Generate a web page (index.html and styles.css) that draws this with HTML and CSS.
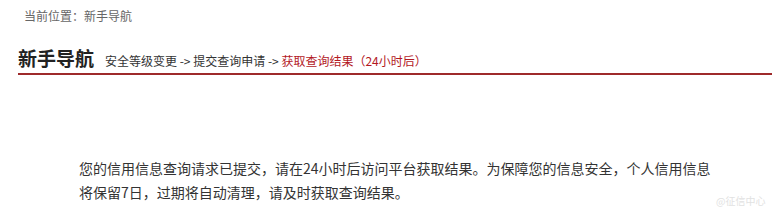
FILE: index.html
```html
<!DOCTYPE html>
<html lang="zh-CN">
  <head>
    <meta charset="UTF-8" />
    <meta name="viewport" content="width=device-width, initial-scale=1.0" />
    <title>新手导航</title>
    <link rel="stylesheet" href="styles.css">
  </head>
  <body>
    <div class="crumb">当前位置：新手导航</div>
    <div class="guide-head">
      <h1>新手导航</h1>
      <div class="steps">
        安全等级变更 -&gt; 提交查询申请 -&gt; <span class="current">获取查询结果（24小时后）</span>
      </div>
    </div>
    <div class="notice">
      <p>您的信用信息查询请求已提交，请在24小时后访问平台获取结果。为保障您的信息安全，个人信用信息将保留7日，过期将自动清理，请及时获取查询结果。</p>
    </div>
    <div class="watermark">@征信中心</div>
  </body>
</html>
```

FILE: styles.css
```css
body {
  margin: 0;
  font-family: "Noto Sans CJK SC", "Microsoft YaHei", sans-serif;
  color: #333;
  background: #fff;
  position: relative;
  height: 208px;
  overflow: hidden;
}
.crumb {
  padding: 6px 0 0 24px;
  font-size: 12px;
  line-height: 20px;
  color: #666;
}
.guide-head {
  margin: 19px 0 0 18px;
  display: flex;
  align-items: baseline;
  border-bottom: 2px solid #9e2a2b;
  padding-bottom: 2px;
}
.guide-head h1 {
  margin: 0;
  font-size: 19px;
  line-height: 26px;
  font-weight: bold;
  color: #222;
}
.steps {
  margin-left: 11px;
  font-size: 12px;
  color: #333;
}
.steps .current {
  color: #b3191f;
}
.notice {
  padding: 81px 0 0 79px;
}
.notice p {
  margin: 0;
  width: 634px;
  font-size: 14px;
  line-height: 24px;
  color: #333;
}
.watermark {
  position: absolute;
  left: 716px;
  top: 195px;
  font-size: 10px;
  line-height: 12px;
  color: #e2e2e2;
  white-space: nowrap;
}
```
